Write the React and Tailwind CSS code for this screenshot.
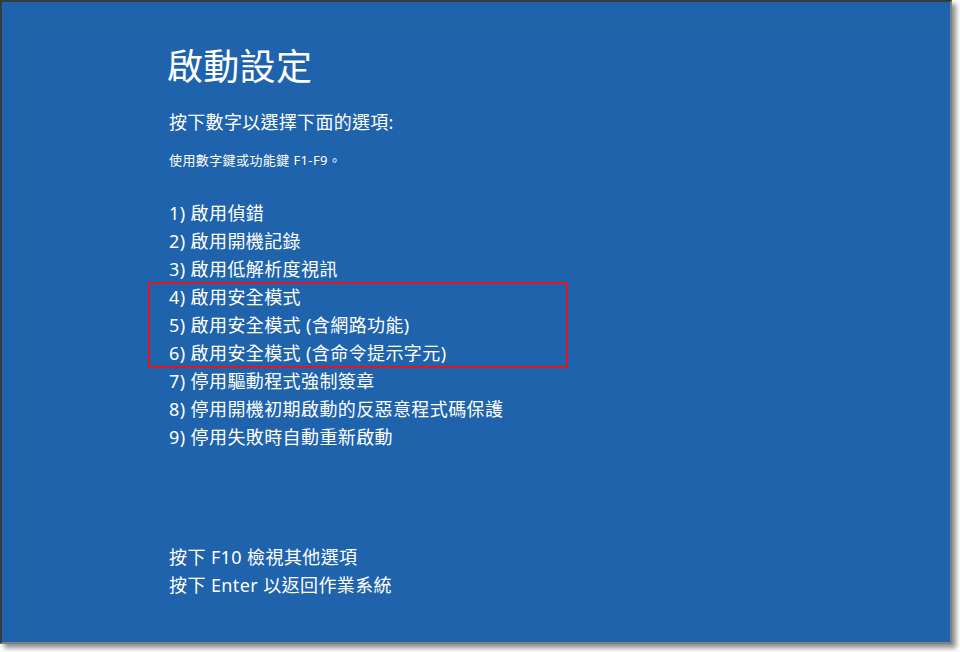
export default function App() {
  const items1 = ["1) 啟用偵錯", "2) 啟用開機記錄", "3) 啟用低解析度視訊"];
  const items2 = ["4) 啟用安全模式", "5) 啟用安全模式 (含網路功能)", "6) 啟用安全模式 (含命令提示字元)"];
  const items3 = ["7) 停用驅動程式強制簽章", "8) 停用開機初期啟動的反惡意程式碼保護", "9) 停用失敗時自動重新啟動"];
  return (
    <div className="w-[960px] h-[652px] bg-white overflow-hidden font-['Noto_Sans','Noto_Sans_CJK_TC',sans-serif]">
      <div className="w-[952px] h-[644px] bg-[#1f63ad] border-l-2 border-t-2 border-l-[#3a3a3a] border-t-[#3a3a3a] border-r-2 border-b-2 border-r-[#808080] border-b-[#808080] shadow-[4px_4px_5px_rgba(0,0,0,0.45)] text-white">
        <div className="flex flex-col pl-[165px] pt-[43px]">
          <div className="text-[36px] leading-[44px] tracking-[0.3px]">啟動設定</div>
          <div className="mt-[19px] pl-[2px] text-[18px] leading-[28px] tracking-[0.3px]">按下數字以選擇下面的選項:</div>
          <div className="mt-[14px] pl-[2px] text-[13px] leading-[20px] tracking-[0.4px]">使用數字鍵或功能鍵 F1-F9。</div>
          <div className="mt-[29px] pl-[2px] flex flex-col text-[18px] leading-[28px] tracking-[0.4px]">
            {items1.map((t) => (
              <div key={t}>{t}</div>
            ))}
            <div className="relative flex flex-col">
              <div className="absolute left-[-21px] top-[-1px] bottom-[-1px] w-[420px] border-2 border-[#e5141e]" />
              {items2.map((t) => (
                <div key={t}>{t}</div>
              ))}
            </div>
            {items3.map((t) => (
              <div key={t}>{t}</div>
            ))}
          </div>
          <div className="mt-[92px] pl-[2px] flex flex-col text-[18px] leading-[28px] tracking-[0.4px]">
            <div>按下 F10 檢視其他選項</div>
            <div>按下 Enter 以返回作業系統</div>
          </div>
        </div>
      </div>
    </div>
  );
}
